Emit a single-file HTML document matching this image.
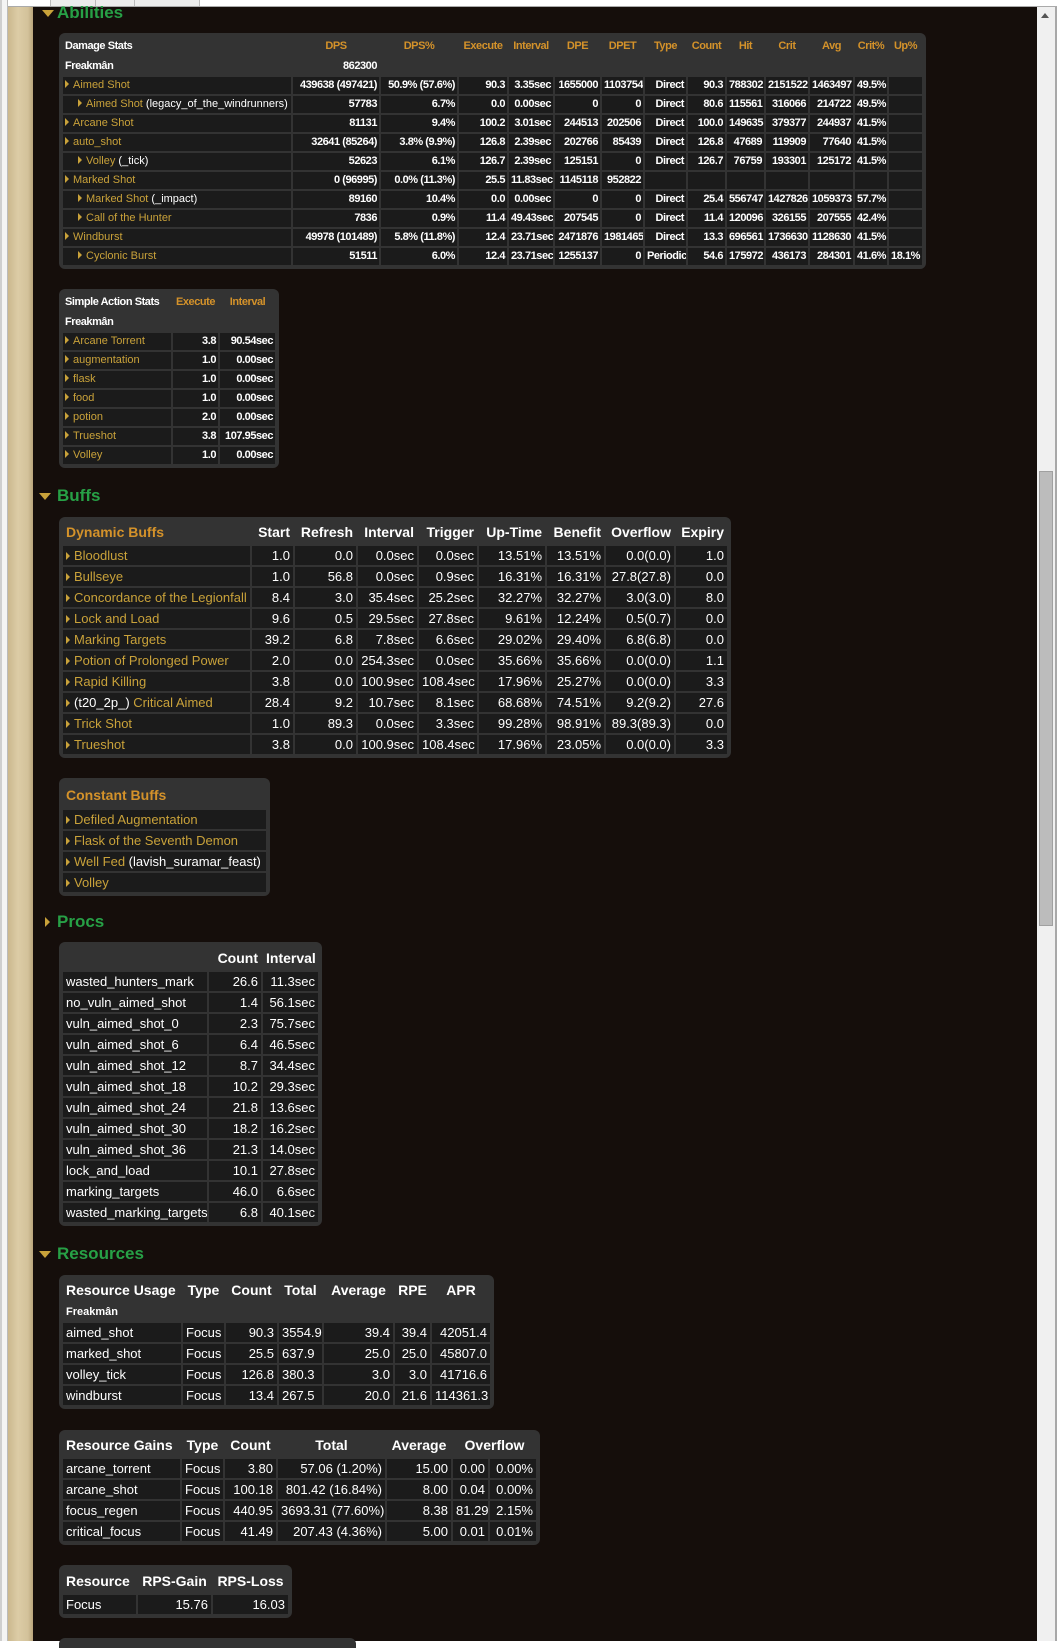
<!DOCTYPE html>
<html><head><meta charset="utf-8"><style>
*{margin:0;padding:0;box-sizing:border-box}
body{width:1057px;height:1641px;overflow:hidden;background:#fff;font-family:"Liberation Sans",Arial,sans-serif;position:relative}
.abs{position:absolute}
.dark{left:33px;top:7px;width:1004px;height:1634px;background:#150e0b}
.parch{left:8px;top:7px;width:25px;height:1634px;background:linear-gradient(90deg,#cbb88e,#dccca6 40%,#d3c29a 80%,#b9a57c)}
.lg{left:0;top:0;width:8px;height:1641px;background:#f4f4f4;border-left:2px solid #cfcfcf;border-right:1px solid #bbb}
.sb{left:1037px;top:7px;width:20px;height:1634px;background:#f0f0f0;border-right:2px solid #a8a8a8}
.thumb{left:1039px;top:471px;width:14px;height:455px;background:#bcbcbc;border:1px solid #a0a0a0}
.h{position:absolute;left:57px;font-size:17px;font-weight:bold;color:#27a046;line-height:20px}
.tri{position:absolute;width:0;height:0;border-left:6px solid transparent;border-right:6px solid transparent;border-top:7px solid #c9a23a}
.trr{position:absolute;width:0;height:0;border-top:5px solid transparent;border-bottom:5px solid transparent;border-left:5px solid #c9a23a}
.box{position:absolute;background:#333;border-radius:6px;padding:4px;display:flex;flex-direction:column;gap:2px}
.r{display:flex;gap:2px}
.r>div{padding:0 3px;white-space:nowrap;overflow:hidden;color:#fff;text-align:right}
.r.d>div{background:#1b1b1b}
.r>div:first-child{text-align:left}
.s11{font-size:11px;font-weight:bold;letter-spacing:-0.45px}
.s11 .r{height:17px;line-height:17px}
.s11 .r>div{padding:0 2px}
.s13{font-size:13px}
.s13 .r{height:19px;line-height:19px}
.r>div.g,.g{color:#c9a23a;font-weight:normal;letter-spacing:0}
.o{color:#d4922a!important}
.w{color:#fff}
.ar{display:inline-block;width:0;height:0;border-top:4px solid transparent;border-bottom:4px solid transparent;border-left:4px solid #c9a23a;margin-right:4px;vertical-align:0px}
.hd{font-weight:bold;font-size:14px}
.c{text-align:center!important}
</style></head><body>
<div class="abs lg"></div>
<div class="abs" style="left:50px;top:0;width:150px;height:6px;background:#ececec;border-right:1px solid #bbb;border-left:1px solid #bbb"></div>
<div class="abs" style="left:95px;top:0;width:1px;height:6px;background:#bbb"></div>
<div class="abs" style="left:134px;top:0;width:1px;height:6px;background:#bbb"></div>
<div class="abs" style="left:8px;top:6px;width:1049px;height:1px;background:#aaa"></div>
<div class="abs parch"></div>
<div class="abs dark"></div>
<div class="abs sb"></div>
<div class="abs" style="left:1041px;top:13px;width:0;height:0;border-left:4px solid transparent;border-right:4px solid transparent;border-bottom:5px solid #555"></div>
<div class="abs thumb"></div>

<div class="tri" style="left:42px;top:10px"></div><div class="h" style="top:3px">Abilities</div>

<div class="box s11" style="left:59px;top:33px;width:867px">
<div class="r" style="height:18px;line-height:18px"><div style="width:228px">Damage Stats</div><div class="o c" style="width:86px">DPS</div><div class="o c" style="width:76px">DPS%</div><div class="o c" style="width:48px">Execute</div><div class="o c" style="width:44px">Interval</div><div class="o c" style="width:45px">DPE</div><div class="o c" style="width:41px">DPET</div><div class="o c" style="width:41px">Type</div><div class="o c" style="width:37px">Count</div><div class="o c" style="width:37px">Hit</div><div class="o c" style="width:42px">Crit</div><div class="o c" style="width:43px">Avg</div><div class="o c" style="width:32px">Crit%</div><div class="o c" style="width:33px">Up%</div></div>
<div class="r" style="height:18px;line-height:18px"><div style="width:228px">Freakmân</div><div style="width:86px">862300</div></div>
<div class="r d"><div style="width:228px" class="g"><span class="ar"></span>Aimed Shot</div><div style="width:86px">439638 (497421)</div><div style="width:76px">50.9% (57.6%)</div><div style="width:48px">90.3</div><div style="width:44px">3.35sec</div><div style="width:45px">1655000</div><div style="width:41px">1103754</div><div style="width:41px">Direct</div><div style="width:37px">90.3</div><div style="width:37px">788302</div><div style="width:42px">2151522</div><div style="width:43px">1463497</div><div style="width:32px">49.5%</div><div style="width:33px"></div></div>
<div class="r d"><div style="width:228px;padding-left:15px" class="g"><span class="ar"></span>Aimed Shot <span class="w">(legacy_of_the_windrunners)</span></div><div style="width:86px">57783</div><div style="width:76px">6.7%</div><div style="width:48px">0.0</div><div style="width:44px">0.00sec</div><div style="width:45px">0</div><div style="width:41px">0</div><div style="width:41px">Direct</div><div style="width:37px">80.6</div><div style="width:37px">115561</div><div style="width:42px">316066</div><div style="width:43px">214722</div><div style="width:32px">49.5%</div><div style="width:33px"></div></div>
<div class="r d"><div style="width:228px" class="g"><span class="ar"></span>Arcane Shot</div><div style="width:86px">81131</div><div style="width:76px">9.4%</div><div style="width:48px">100.2</div><div style="width:44px">3.01sec</div><div style="width:45px">244513</div><div style="width:41px">202506</div><div style="width:41px">Direct</div><div style="width:37px">100.0</div><div style="width:37px">149635</div><div style="width:42px">379377</div><div style="width:43px">244937</div><div style="width:32px">41.5%</div><div style="width:33px"></div></div>
<div class="r d"><div style="width:228px" class="g"><span class="ar"></span>auto_shot</div><div style="width:86px">32641 (85264)</div><div style="width:76px">3.8% (9.9%)</div><div style="width:48px">126.8</div><div style="width:44px">2.39sec</div><div style="width:45px">202766</div><div style="width:41px">85439</div><div style="width:41px">Direct</div><div style="width:37px">126.8</div><div style="width:37px">47689</div><div style="width:42px">119909</div><div style="width:43px">77640</div><div style="width:32px">41.5%</div><div style="width:33px"></div></div>
<div class="r d"><div style="width:228px;padding-left:15px" class="g"><span class="ar"></span>Volley <span class="w">(_tick)</span></div><div style="width:86px">52623</div><div style="width:76px">6.1%</div><div style="width:48px">126.7</div><div style="width:44px">2.39sec</div><div style="width:45px">125151</div><div style="width:41px">0</div><div style="width:41px">Direct</div><div style="width:37px">126.7</div><div style="width:37px">76759</div><div style="width:42px">193301</div><div style="width:43px">125172</div><div style="width:32px">41.5%</div><div style="width:33px"></div></div>
<div class="r d"><div style="width:228px" class="g"><span class="ar"></span>Marked Shot</div><div style="width:86px">0 (96995)</div><div style="width:76px">0.0% (11.3%)</div><div style="width:48px">25.5</div><div style="width:44px">11.83sec</div><div style="width:45px">1145118</div><div style="width:41px">952822</div><div style="width:41px"></div><div style="width:37px"></div><div style="width:37px"></div><div style="width:42px"></div><div style="width:43px"></div><div style="width:32px"></div><div style="width:33px"></div></div>
<div class="r d"><div style="width:228px;padding-left:15px" class="g"><span class="ar"></span>Marked Shot <span class="w">(_impact)</span></div><div style="width:86px">89160</div><div style="width:76px">10.4%</div><div style="width:48px">0.0</div><div style="width:44px">0.00sec</div><div style="width:45px">0</div><div style="width:41px">0</div><div style="width:41px">Direct</div><div style="width:37px">25.4</div><div style="width:37px">556747</div><div style="width:42px">1427826</div><div style="width:43px">1059373</div><div style="width:32px">57.7%</div><div style="width:33px"></div></div>
<div class="r d"><div style="width:228px;padding-left:15px" class="g"><span class="ar"></span>Call of the Hunter</div><div style="width:86px">7836</div><div style="width:76px">0.9%</div><div style="width:48px">11.4</div><div style="width:44px">49.43sec</div><div style="width:45px">207545</div><div style="width:41px">0</div><div style="width:41px">Direct</div><div style="width:37px">11.4</div><div style="width:37px">120096</div><div style="width:42px">326155</div><div style="width:43px">207555</div><div style="width:32px">42.4%</div><div style="width:33px"></div></div>
<div class="r d"><div style="width:228px" class="g"><span class="ar"></span>Windburst</div><div style="width:86px">49978 (101489)</div><div style="width:76px">5.8% (11.8%)</div><div style="width:48px">12.4</div><div style="width:44px">23.71sec</div><div style="width:45px">2471876</div><div style="width:41px">1981465</div><div style="width:41px">Direct</div><div style="width:37px">13.3</div><div style="width:37px">696561</div><div style="width:42px">1736630</div><div style="width:43px">1128630</div><div style="width:32px">41.5%</div><div style="width:33px"></div></div>
<div class="r d"><div style="width:228px;padding-left:15px" class="g"><span class="ar"></span>Cyclonic Burst</div><div style="width:86px">51511</div><div style="width:76px">6.0%</div><div style="width:48px">12.4</div><div style="width:44px">23.71sec</div><div style="width:45px">1255137</div><div style="width:41px">0</div><div style="width:41px">Periodic</div><div style="width:37px">54.6</div><div style="width:37px">175972</div><div style="width:42px">436173</div><div style="width:43px">284301</div><div style="width:32px">41.6%</div><div style="width:33px">18.1%</div></div>
</div>

<div class="box s11" style="left:59px;top:289px;width:220px">
<div class="r" style="height:18px;line-height:18px"><div style="width:108px">Simple Action Stats</div><div class="o c" style="width:45px">Execute</div><div class="o c" style="width:55px">Interval</div></div>
<div class="r" style="height:18px;line-height:18px"><div style="width:108px">Freakmân</div></div>
<div class="r d"><div class="g" style="width:108px"><span class="ar"></span>Arcane Torrent</div><div style="width:45px">3.8</div><div style="width:55px">90.54sec</div></div>
<div class="r d"><div class="g" style="width:108px"><span class="ar"></span>augmentation</div><div style="width:45px">1.0</div><div style="width:55px">0.00sec</div></div>
<div class="r d"><div class="g" style="width:108px"><span class="ar"></span>flask</div><div style="width:45px">1.0</div><div style="width:55px">0.00sec</div></div>
<div class="r d"><div class="g" style="width:108px"><span class="ar"></span>food</div><div style="width:45px">1.0</div><div style="width:55px">0.00sec</div></div>
<div class="r d"><div class="g" style="width:108px"><span class="ar"></span>potion</div><div style="width:45px">2.0</div><div style="width:55px">0.00sec</div></div>
<div class="r d"><div class="g" style="width:108px"><span class="ar"></span>Trueshot</div><div style="width:45px">3.8</div><div style="width:55px">107.95sec</div></div>
<div class="r d"><div class="g" style="width:108px"><span class="ar"></span>Volley</div><div style="width:45px">1.0</div><div style="width:55px">0.00sec</div></div>
</div>

<div class="tri" style="left:39px;top:493px"></div><div class="h" style="top:486px">Buffs</div>

<div class="box s13" style="left:59px;top:517px;width:672px">
<div class="r hd" style="height:23px;line-height:23px"><div class="o" style="width:187px">Dynamic Buffs</div><div style="width:41px">Start</div><div style="width:61px">Refresh</div><div style="width:59px">Interval</div><div style="width:58px">Trigger</div><div style="width:66px">Up-Time</div><div style="width:57px">Benefit</div><div style="width:68px">Overflow</div><div style="width:51px">Expiry</div></div>
<div class="r d"><div class="g" style="width:187px"><span class="ar"></span>Bloodlust</div><div style="width:41px">1.0</div><div style="width:61px">0.0</div><div style="width:59px">0.0sec</div><div style="width:58px">0.0sec</div><div style="width:66px">13.51%</div><div style="width:57px">13.51%</div><div style="width:68px">0.0(0.0)</div><div style="width:51px">1.0</div></div>
<div class="r d"><div class="g" style="width:187px"><span class="ar"></span>Bullseye</div><div style="width:41px">1.0</div><div style="width:61px">56.8</div><div style="width:59px">0.0sec</div><div style="width:58px">0.9sec</div><div style="width:66px">16.31%</div><div style="width:57px">16.31%</div><div style="width:68px">27.8(27.8)</div><div style="width:51px">0.0</div></div>
<div class="r d"><div class="g" style="width:187px"><span class="ar"></span>Concordance of the Legionfall</div><div style="width:41px">8.4</div><div style="width:61px">3.0</div><div style="width:59px">35.4sec</div><div style="width:58px">25.2sec</div><div style="width:66px">32.27%</div><div style="width:57px">32.27%</div><div style="width:68px">3.0(3.0)</div><div style="width:51px">8.0</div></div>
<div class="r d"><div class="g" style="width:187px"><span class="ar"></span>Lock and Load</div><div style="width:41px">9.6</div><div style="width:61px">0.5</div><div style="width:59px">29.5sec</div><div style="width:58px">27.8sec</div><div style="width:66px">9.61%</div><div style="width:57px">12.24%</div><div style="width:68px">0.5(0.7)</div><div style="width:51px">0.0</div></div>
<div class="r d"><div class="g" style="width:187px"><span class="ar"></span>Marking Targets</div><div style="width:41px">39.2</div><div style="width:61px">6.8</div><div style="width:59px">7.8sec</div><div style="width:58px">6.6sec</div><div style="width:66px">29.02%</div><div style="width:57px">29.40%</div><div style="width:68px">6.8(6.8)</div><div style="width:51px">0.0</div></div>
<div class="r d"><div class="g" style="width:187px"><span class="ar"></span>Potion of Prolonged Power</div><div style="width:41px">2.0</div><div style="width:61px">0.0</div><div style="width:59px">254.3sec</div><div style="width:58px">0.0sec</div><div style="width:66px">35.66%</div><div style="width:57px">35.66%</div><div style="width:68px">0.0(0.0)</div><div style="width:51px">1.1</div></div>
<div class="r d"><div class="g" style="width:187px"><span class="ar"></span>Rapid Killing</div><div style="width:41px">3.8</div><div style="width:61px">0.0</div><div style="width:59px">100.9sec</div><div style="width:58px">108.4sec</div><div style="width:66px">17.96%</div><div style="width:57px">25.27%</div><div style="width:68px">0.0(0.0)</div><div style="width:51px">3.3</div></div>
<div class="r d"><div class="g" style="width:187px"><span class="ar"></span><span class="w">(t20_2p_)</span> Critical Aimed</div><div style="width:41px">28.4</div><div style="width:61px">9.2</div><div style="width:59px">10.7sec</div><div style="width:58px">8.1sec</div><div style="width:66px">68.68%</div><div style="width:57px">74.51%</div><div style="width:68px">9.2(9.2)</div><div style="width:51px">27.6</div></div>
<div class="r d"><div class="g" style="width:187px"><span class="ar"></span>Trick Shot</div><div style="width:41px">1.0</div><div style="width:61px">89.3</div><div style="width:59px">0.0sec</div><div style="width:58px">3.3sec</div><div style="width:66px">99.28%</div><div style="width:57px">98.91%</div><div style="width:68px">89.3(89.3)</div><div style="width:51px">0.0</div></div>
<div class="r d"><div class="g" style="width:187px"><span class="ar"></span>Trueshot</div><div style="width:41px">3.8</div><div style="width:61px">0.0</div><div style="width:59px">100.9sec</div><div style="width:58px">108.4sec</div><div style="width:66px">17.96%</div><div style="width:57px">23.05%</div><div style="width:68px">0.0(0.0)</div><div style="width:51px">3.3</div></div>
</div>

<div class="box s13" style="left:59px;top:778px;width:211px">
<div class="r hd" style="height:26px;line-height:26px"><div class="o" style="width:203px">Constant Buffs</div></div>
<div class="r d"><div class="g" style="width:203px"><span class="ar"></span>Defiled Augmentation</div></div>
<div class="r d"><div class="g" style="width:203px"><span class="ar"></span>Flask of the Seventh Demon</div></div>
<div class="r d"><div class="g" style="width:203px"><span class="ar"></span>Well Fed <span class="w">(lavish_suramar_feast)</span></div></div>
<div class="r d"><div class="g" style="width:203px"><span class="ar"></span>Volley</div></div>
</div>

<div class="trr" style="left:45px;top:917px"></div><div class="h" style="top:912px">Procs</div>

<div class="box s13" style="left:59px;top:942px;width:263px">
<div class="r hd" style="height:24px;line-height:24px"><div style="width:144px"></div><div style="width:52px">Count</div><div style="width:55px">Interval</div></div>
<div class="r d"><div style="width:144px">wasted_hunters_mark</div><div style="width:52px">26.6</div><div style="width:55px">11.3sec</div></div>
<div class="r d"><div style="width:144px">no_vuln_aimed_shot</div><div style="width:52px">1.4</div><div style="width:55px">56.1sec</div></div>
<div class="r d"><div style="width:144px">vuln_aimed_shot_0</div><div style="width:52px">2.3</div><div style="width:55px">75.7sec</div></div>
<div class="r d"><div style="width:144px">vuln_aimed_shot_6</div><div style="width:52px">6.4</div><div style="width:55px">46.5sec</div></div>
<div class="r d"><div style="width:144px">vuln_aimed_shot_12</div><div style="width:52px">8.7</div><div style="width:55px">34.4sec</div></div>
<div class="r d"><div style="width:144px">vuln_aimed_shot_18</div><div style="width:52px">10.2</div><div style="width:55px">29.3sec</div></div>
<div class="r d"><div style="width:144px">vuln_aimed_shot_24</div><div style="width:52px">21.8</div><div style="width:55px">13.6sec</div></div>
<div class="r d"><div style="width:144px">vuln_aimed_shot_30</div><div style="width:52px">18.2</div><div style="width:55px">16.2sec</div></div>
<div class="r d"><div style="width:144px">vuln_aimed_shot_36</div><div style="width:52px">21.3</div><div style="width:55px">14.0sec</div></div>
<div class="r d"><div style="width:144px">lock_and_load</div><div style="width:52px">10.1</div><div style="width:55px">27.8sec</div></div>
<div class="r d"><div style="width:144px">marking_targets</div><div style="width:52px">46.0</div><div style="width:55px">6.6sec</div></div>
<div class="r d"><div style="width:144px">wasted_marking_targets</div><div style="width:52px">6.8</div><div style="width:55px">40.1sec</div></div>
</div>

<div class="tri" style="left:39px;top:1251px"></div><div class="h" style="top:1244px">Resources</div>

<div class="box s13" style="left:59px;top:1275px;width:435px">
<div class="r hd" style="height:23px;line-height:23px"><div style="width:118px">Resource Usage</div><div class="c" style="width:41px">Type</div><div class="c" style="width:51px">Count</div><div class="c" style="width:43px">Total</div><div class="c" style="width:69px">Average</div><div class="c" style="width:35px">RPE</div><div class="c" style="width:58px">APR</div></div>
<div class="r" style="height:17px;line-height:17px;font-size:11px;font-weight:bold"><div style="width:118px">Freakmân</div></div>
<div class="r d"><div style="width:118px">aimed_shot</div><div style="width:41px;text-align:left">Focus</div><div style="width:51px">90.3</div><div style="width:43px;text-align:left">3554.9</div><div style="width:69px">39.4</div><div style="width:35px">39.4</div><div style="width:58px">42051.4</div></div>
<div class="r d"><div style="width:118px">marked_shot</div><div style="width:41px;text-align:left">Focus</div><div style="width:51px">25.5</div><div style="width:43px;text-align:left">637.9</div><div style="width:69px">25.0</div><div style="width:35px">25.0</div><div style="width:58px">45807.0</div></div>
<div class="r d"><div style="width:118px">volley_tick</div><div style="width:41px;text-align:left">Focus</div><div style="width:51px">126.8</div><div style="width:43px;text-align:left">380.3</div><div style="width:69px">3.0</div><div style="width:35px">3.0</div><div style="width:58px">41716.6</div></div>
<div class="r d"><div style="width:118px">windburst</div><div style="width:41px;text-align:left">Focus</div><div style="width:51px">13.4</div><div style="width:43px;text-align:left">267.5</div><div style="width:69px">20.0</div><div style="width:35px">21.6</div><div style="width:58px">114361.3</div></div>
</div>

<div class="box s13" style="left:59px;top:1430px;width:481px">
<div class="r hd" style="height:23px;line-height:23px"><div style="width:117px">Resource Gains</div><div class="c" style="width:41px">Type</div><div class="c" style="width:51px">Count</div><div class="c" style="width:107px">Total</div><div class="c" style="width:64px">Average</div><div class="c" style="width:83px;margin-right:-2px">Overflow</div></div>
<div class="r d"><div style="width:117px">arcane_torrent</div><div style="width:41px;text-align:left">Focus</div><div style="width:51px">3.80</div><div style="width:107px">57.06 (1.20%)</div><div style="width:64px">15.00</div><div style="width:35px">0.00</div><div style="width:46px">0.00%</div></div>
<div class="r d"><div style="width:117px">arcane_shot</div><div style="width:41px;text-align:left">Focus</div><div style="width:51px">100.18</div><div style="width:107px">801.42 (16.84%)</div><div style="width:64px">8.00</div><div style="width:35px">0.04</div><div style="width:46px">0.00%</div></div>
<div class="r d"><div style="width:117px">focus_regen</div><div style="width:41px;text-align:left">Focus</div><div style="width:51px">440.95</div><div style="width:107px">3693.31 (77.60%)</div><div style="width:64px">8.38</div><div style="width:35px">81.29</div><div style="width:46px">2.15%</div></div>
<div class="r d"><div style="width:117px">critical_focus</div><div style="width:41px;text-align:left">Focus</div><div style="width:51px">41.49</div><div style="width:107px">207.43 (4.36%)</div><div style="width:64px">5.00</div><div style="width:35px">0.01</div><div style="width:46px">0.01%</div></div>
</div>

<div class="box s13" style="left:59px;top:1565px;width:233px">
<div class="r hd" style="height:24px;line-height:24px"><div style="width:73px">Resource</div><div class="c" style="width:73px">RPS-Gain</div><div class="c" style="width:75px">RPS-Loss</div></div>
<div class="r d"><div style="width:73px">Focus</div><div style="width:73px">15.76</div><div style="width:75px">16.03</div></div>
</div>

<div class="abs" style="left:59px;top:1638px;width:297px;height:10px;background:#333;border-radius:6px 6px 0 0"></div>
</body></html>
